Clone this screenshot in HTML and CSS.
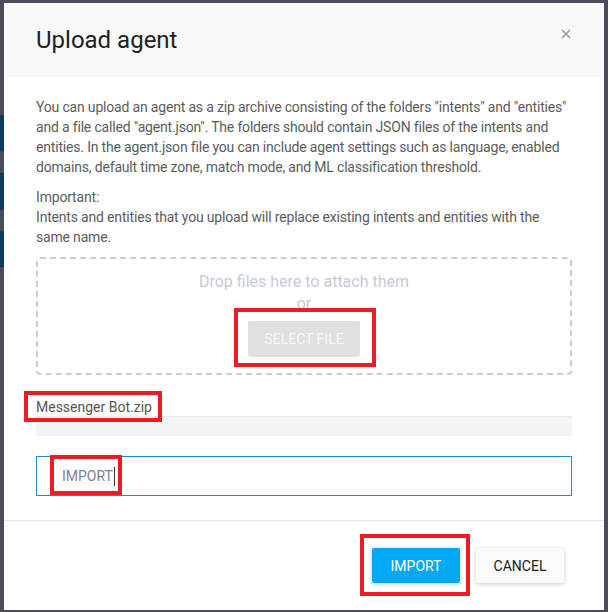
FILE: index.html
```html
<!DOCTYPE html>
<html lang="en">
<head>
<meta charset="utf-8">
<title>Upload agent</title>
<link rel="stylesheet" href="styles.css">
</head>
<body>
<div class="modal">
  <div class="modal-header">
    <h1 class="title">Upload agent</h1>
    <button class="close" aria-label="Close">
      <svg width="10" height="10" viewBox="0 0 10 10"><path d="M1 1L9 9M9 1L1 9" stroke="#9e9e9e" stroke-width="1.6" fill="none"/></svg>
    </button>
  </div>
  <div class="modal-body">
    <p class="text text-wide">You can upload an agent as a zip archive consisting of the folders "intents" and "entities" and a file called "agent.json". The folders should contain JSON files of the intents and entities. In the agent.json file you can include agent settings such as language, enabled domains, default time zone, match mode, and ML classification threshold.</p>
    <p class="text">Important:<br>Intents and entities that you upload will replace existing intents and entities with the same name.</p>
    <div class="dropzone">
      <div class="drop-text">Drop files here to attach them</div>
      <div class="drop-or">or</div>
      <button class="btn-select">SELECT FILE</button>
    </div>
    <div class="file-name">Messenger Bot.zip</div>
    <div class="progress"></div>
    <div class="input"><span class="input-text">IMPORT</span><span class="caret"></span></div>
  </div>
  <div class="modal-footer">
    <button class="btn btn-primary">IMPORT</button>
    <button class="btn btn-default">CANCEL</button>
  </div>
  <div class="mark mark-select"></div>
  <div class="mark mark-file"></div>
  <div class="mark mark-input"></div>
  <div class="mark mark-import"></div>
</div>
</body>
</html>
```

FILE: styles.css
```css
html, body {
  margin: 0;
  padding: 0;
}
body {
  width: 608px;
  height: 612px;
  overflow: hidden;
  padding: 3px 0 0 4px;
  box-sizing: border-box;
  background-color: #4a4c5c;
  background-image:
    linear-gradient(#0f3a5f, #0f3a5f),
    linear-gradient(#0f3a5f, #0f3a5f),
    linear-gradient(#0f3a5f, #0f3a5f);
  background-size: 4px 36px, 4px 37px, 4px 36px;
  background-position: 0 115px, 0 173px, 0 231px;
  background-repeat: no-repeat;
  font-family: Roboto, "Liberation Sans", sans-serif;
}
.modal {
  position: relative;
  width: 600px;
  height: 607px;
  background: #ffffff;
  display: flex;
  flex-direction: column;
}
.modal-header {
  height: 74px;
  box-sizing: border-box;
  background: #f8f8f8;
  padding: 23px 32px 0 32px;
  display: flex;
  justify-content: space-between;
  align-items: flex-start;
}
.title {
  margin: 0;
  font-size: 24px;
  line-height: 28px;
  font-weight: 400;
  color: #212121;
}
.close {
  border: 0;
  background: transparent;
  padding: 0;
  margin: 3px 1px 0 0;
  width: 10px;
  height: 10px;
  display: flex;
}
.modal-body {
  padding: 20px 32px 24px 32px;
  display: flex;
  flex-direction: column;
}
.text {
  margin: 0 0 10px 0;
  font-size: 14px;
  line-height: 20px;
  letter-spacing: -0.18px;
  color: #5c5c5c;
}
.text-wide {
  margin-right: -8px;
}
.dropzone {
  height: 118px;
  box-sizing: border-box;
  border: 2px dashed #cccccc;
  border-radius: 4px;
  padding-top: 13px;
  display: flex;
  flex-direction: column;
  align-items: center;
}
.drop-text {
  font-size: 16px;
  line-height: 20px;
  color: #c7c9d8;
}
.drop-or {
  margin-top: 2px;
  font-size: 16px;
  line-height: 20px;
  color: #c7c9d8;
}
.btn-select {
  margin-top: 7px;
  width: 112px;
  height: 36px;
  border: 0;
  border-radius: 2px;
  background: #e0e0e0;
  color: #f7f7f7;
  font-family: Roboto, "Liberation Sans", sans-serif;
  font-size: 14px;
  padding: 0;
}
.file-name {
  margin-top: 23px;
  font-size: 14px;
  line-height: 18px;
  color: #555555;
}
.progress {
  height: 20px;
  box-sizing: border-box;
  background: #f4f4f4;
  border-top: 1px solid #ececec;
}
.input {
  margin-top: 20px;
  height: 40px;
  box-sizing: border-box;
  border: 1px solid #1e88d8;
  padding-left: 25px;
  display: flex;
  align-items: center;
}
.input-text {
  font-size: 14px;
  color: #7d828e;
}
.caret {
  width: 1px;
  height: 19px;
  background: #333333;
  margin-left: 1px;
}
.modal-footer {
  border-top: 1px solid #e5e5e5;
  padding: 27px 40px 0 0;
  display: flex;
  justify-content: flex-end;
  gap: 16px;
}
.btn {
  width: 88px;
  height: 35px;
  border: 0;
  border-radius: 2px;
  font-family: Roboto, "Liberation Sans", sans-serif;
  font-size: 14px;
  padding: 0;
  box-shadow: 0 1px 4px rgba(0, 0, 0, 0.22);
}
.btn-primary {
  background: #03a9f4;
  color: #ffffff;
}
.btn-default {
  background: #fafafa;
  color: #212121;
}
.mark {
  position: absolute;
  border: 4px solid #ed1c24;
  box-sizing: border-box;
}
.mark-select {
  left: 230px;
  top: 305px;
  width: 142px;
  height: 59px;
}
.mark-file {
  left: 20px;
  top: 388px;
  width: 138px;
  height: 31px;
}
.mark-input {
  left: 46px;
  top: 452px;
  width: 72px;
  height: 40px;
}
.mark-import {
  left: 356px;
  top: 531px;
  width: 110px;
  height: 62px;
}
```
